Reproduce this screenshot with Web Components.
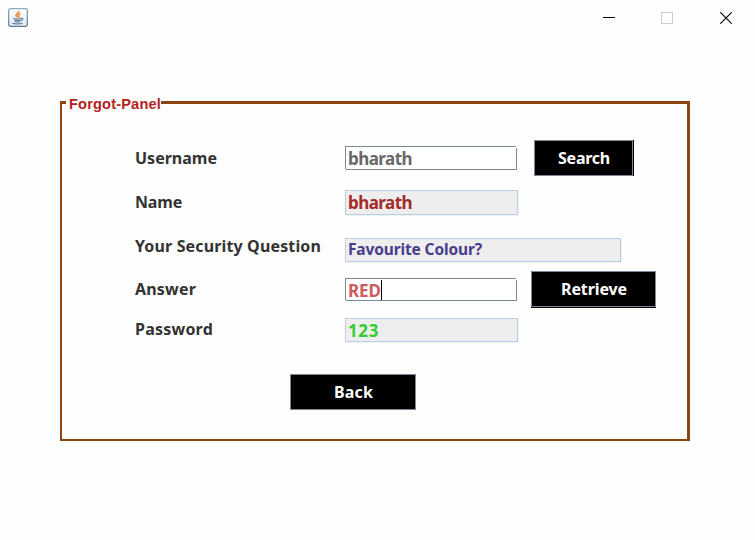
<!DOCTYPE html>
<html lang="en">
<head>
<meta charset="utf-8">
<title>Forgot-Panel</title>
<style>
html, body { margin: 0; height: 100%; background: #fefefe; overflow: hidden; }
</style>
</head>
<body>
<app-window></app-window>
<script>
class FitText extends HTMLElement {
  connectedCallback() {
    const root = this.attachShadow({ mode: 'open' });
    root.innerHTML = `<style>
      :host { display: block; flex: none; white-space: nowrap; width: ${this.getAttribute('w')}px; }
      span { display: inline-block; }
    </style><span><slot></slot></span>`;
    const span = root.querySelector('span');
    const n = this.textContent.length;
    const natural = span.getBoundingClientRect().width;
    span.style.letterSpacing = (this.getAttribute('w') - natural) / n + 'px';
  }
}

class TitleBar extends HTMLElement {
  connectedCallback() {
    this.attachShadow({ mode: 'open' }).innerHTML = `<style>
      :host { display: flex; height: 35px; box-sizing: border-box; padding: 8px 23px 0 8px; align-items: flex-start; }
      svg { display: block; flex: none; }
      .java { margin-right: auto; }
      .min { margin-right: 46px; }
      .max { margin-right: 47px; }
      .min, .max, .close { margin-top: 4px; }
    </style>
    <svg class="java" width="20" height="20" viewBox="0 0 20 20">
      <defs><linearGradient id="g" x2="0" y2="1"><stop stop-color="#8fa9bd"/><stop offset="1" stop-color="#5b7f9c"/></linearGradient>
      <linearGradient id="f" x2="0" y2="1"><stop stop-color="#fff"/><stop offset="1" stop-color="#e2e8ec"/></linearGradient></defs>
      <rect x=".6" y=".6" width="18.8" height="17.8" rx="2" fill="url(#f)" stroke="url(#g)" stroke-width="1.3"/>
      <path d="M10.600 3c1 1.800-3.200 2.700-2.500 4.500.2.700 1 1.200 1.200 1.900M12.300 5.500c-2 .8-2.300 1.600-1.500 2.500.4.500 0 1.100-.5 1.400" fill="none" stroke="#ef8a3c" stroke-width="1.700"/>
      <path d="M5.200 10.200c2 .8 6.300.8 8.300 0M6 12c1.500.8 5 .8 6.500 0M6.800 13.500c1.500.5 4 .5 5.200 0M13 10.300c2.800-.5 2.200 2-.2 2.600M4.300 15c1.500 1.300 8.800 1.200 10.200 0" fill="none" stroke="#6688a6" stroke-width="1.200"/>
    </svg>
    <svg class="min" width="12" height="12" shape-rendering="crispEdges"><path d="M0 5.500h12" stroke="#000"/></svg>
    <svg class="max" width="12" height="12" shape-rendering="crispEdges"><path d="M.5.5h11v11H.5z" fill="none" stroke="#ccc"/></svg>
    <svg class="close" width="12" height="12"><path d="M.3.300l11.400 11.400M11.700.300L.3 11.700" stroke="#000" stroke-width="1.100"/></svg>`;
  }
}

class TitledPanel extends HTMLElement {
  connectedCallback() {
    this.attachShadow({ mode: 'open' }).innerHTML = `<style>
      :host { display: flex; flex-direction: column; box-sizing: border-box; width: 630px; height: 340px; margin: 66px 0 0 60px;
        border: solid #8b4513; border-width: 0 3px 2px 2px; }
      header { display: flex; height: 3px; margin-left: -2px; }
      header::before { content: ''; width: 6px; background: #8b4513; }
      header::after { content: ''; flex: 1; background: #8b4513; }
      .title { padding-left: 3px; font: bold 14.6px/18px "Liberation Sans", Arial, sans-serif; color: #b22222; height: 18px; margin-top: -6px; }
    </style>
    <header><div class="title"><fit-text w="92">${this.getAttribute('heading')}</fit-text></div></header>
    <slot></slot>`;
  }
}

class FormRow extends HTMLElement {
  connectedCallback() {
    this.attachShadow({ mode: 'open' }).innerHTML = `<style>
      :host { display: flex; align-items: center; padding-left: 73px; height: ${this.getAttribute('h')}px; margin-top: ${this.getAttribute('gap')}px; flex: none; }
      .label { width: 210px; color: #333; font-size: 16px; line-height: 20px; margin-top: ${this.getAttribute('lift') || 0}px; }
    </style>
    <div class="label"><fit-text w="${this.getAttribute('lw')}">${this.getAttribute('label')}</fit-text></div>
    <slot></slot>`;
  }
}

class TextBox extends HTMLElement {
  connectedCallback() {
    const a = n => this.getAttribute(n);
    const editable = this.hasAttribute('editable');
    this.attachShadow({ mode: 'open' }).innerHTML = `<style>
      :host { display: flex; align-items: center; position: relative; box-sizing: border-box; width: ${a('w')}px; height: ${a('h')}px; flex: none;
        padding-left: 2px; border: 1px solid ${editable ? '#7a8a99' : '#b8cfe5'};
        background: ${editable ? '#fff' : '#eee'}; color: ${a('color')}; font-size: ${a('size') || 17}px; line-height: 22px;
        ${editable ? '' : 'box-shadow: 1px 1px 0 #f1f1f1;'} }
      :host([editable])::before, :host([editable])::after { content: ''; position: absolute; width: 1px; background: #fefefe; }
      :host([editable])::before { right: -1px; top: -1px; height: 2px; }
      :host([editable])::after { left: -1px; bottom: -1px; height: 1px; }
      .caret { width: 1px; height: 20px; background: #000; margin: 1px 0 0 0; }
      .t { margin-top: ${a('drop') || 0}px; }
    </style><fit-text class="t" w="${a('tw')}">${a('value')}</fit-text>${this.hasAttribute('caret') ? '<i class="caret"></i>' : ''}`;
  }
}

class PushButton extends HTMLElement {
  connectedCallback() {
    const a = n => this.getAttribute(n);
    this.attachShadow({ mode: 'open' }).innerHTML = `<style>
      :host { display: flex; align-items: center; justify-content: center; box-sizing: border-box; flex: none;
        width: ${a('w')}px; height: 36px; margin: ${a('m')}; padding-left: 1px; border: 1px solid #7a8a99; background: #000; color: #fff;
        font-size: 16px; line-height: 20px; box-shadow: ${a('edge') || 'none'}; }
    </style><fit-text w="${a('tw')}">${a('label')}</fit-text>`;
  }
}

class AppWindow extends HTMLElement {
  connectedCallback() {
    this.attachShadow({ mode: 'open' }).innerHTML = `<style>
      :host { display: block; width: 755px; height: 540px; background: #fefefe;
        font-family: "Noto Sans", "Open Sans", sans-serif; font-weight: bold; }
    </style>
    <title-bar></title-bar>
    <titled-panel heading="Forgot-Panel">
      <form-row label="Username" lw="82" h="36" gap="36">
        <text-box editable value="bharath" tw="64" color="#696969" w="172" h="24" drop="2"></text-box>
        <push-button label="Search" tw="52" w="99" m="0 0 0 17px" edge="1px 0 0 #000"></push-button>
      </form-row>
      <form-row label="Name" lw="47" h="25" gap="14" lift="-2">
        <text-box value="bharath" tw="64" color="#a52a2a" w="173" h="25"></text-box>
      </form-row>
      <form-row label="Your Security Question" lw="186" h="24" gap="23" lift="-8">
        <text-box value="Favourite Colour?" tw="134" size="15.5" color="#483d8b" w="276" h="24" drop="-2"></text-box>
      </form-row>
      <form-row label="Answer" lw="61" h="37" gap="9" lift="-2">
        <text-box editable caret value="RED" tw="33" color="#cd5c5c" w="172" h="23" drop="3"></text-box>
        <push-button label="Retrieve" tw="66" w="125" m="0 0 1px 14px" edge="0 1px 0 #000"></push-button>
      </form-row>
      <form-row label="Password" lw="78" h="24" gap="10" lift="-2">
        <text-box value="123" tw="31" color="#32cd32" w="173" h="24" drop="2"></text-box>
      </form-row>
      <push-button label="Back" tw="39" w="126" m="32px 0 0 228px"></push-button>
    </titled-panel>`;
  }
}

customElements.define('fit-text', FitText);
customElements.define('title-bar', TitleBar);
customElements.define('push-button', PushButton);
customElements.define('text-box', TextBox);
customElements.define('form-row', FormRow);
customElements.define('titled-panel', TitledPanel);
customElements.define('app-window', AppWindow);
</script>
</body>
</html>
